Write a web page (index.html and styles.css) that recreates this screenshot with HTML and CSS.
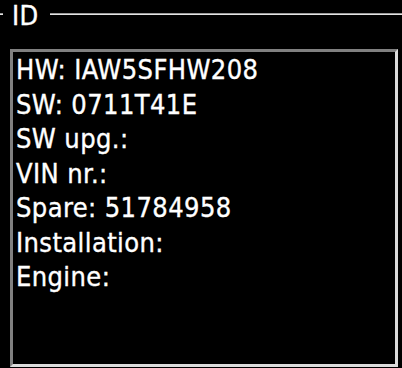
FILE: index.html
```
<!DOCTYPE html>
<html lang="en">
<head>
    <meta charset="UTF-8">
    <title>ID</title>
    <link rel="stylesheet" href="styles.css">
</head>
<body>
    <!-- ID group -->
    <div class="group">
        <div class="group-title">
            <span class="rule rule-short"></span>
            <span class="legend">ID</span>
            <span class="rule rule-long"></span>
        </div>
        <div class="id-box">
            <div class="id-line">HW: IAW5SFHW208</div>
            <div class="id-line">SW: 0711T41E</div>
            <div class="id-line">SW upg.:</div>
            <div class="id-line">VIN nr.:</div>
            <div class="id-line">Spare: 51784958</div>
            <div class="id-line">Installation:</div>
            <div class="id-line">Engine:</div>
        </div>
    </div>
</body>
</html>
```

FILE: styles.css
```
body {
    margin: 0;
    background: #000;
    color: #fff;
    font-family: "DejaVu Sans Condensed", "DejaVu Sans", sans-serif;
    font-size: 27px;
    letter-spacing: 0.4px;
    -webkit-text-stroke: 0.35px #fff;
    overflow: hidden;
}

.group {
    padding: 0 4px 1px 10px;
}

.group-title {
    display: flex;
    align-items: flex-start;
    height: 31px;
    margin-left: -10px;
    margin-right: -4px;
}

.rule {
    height: 2px;
    margin-top: 13px;
    background: #e4e4e4;
    border-top: 1px solid #9a9a9a;
    box-sizing: border-box;
}

.rule-short {
    width: 3px;
}

.rule-long {
    flex: 1;
}

.legend {
    line-height: 31px;
    padding: 0 11px 0 9px;
}

.id-box {
    margin-top: 18px;
    height: 318px;
    box-sizing: border-box;
    border: 3px solid;
    border-color: #808080 #dcdcdc #dcdcdc #808080;
    padding: 1px 3px 0;
}

.id-line {
    line-height: 34.5px;
    white-space: nowrap;
}
```
